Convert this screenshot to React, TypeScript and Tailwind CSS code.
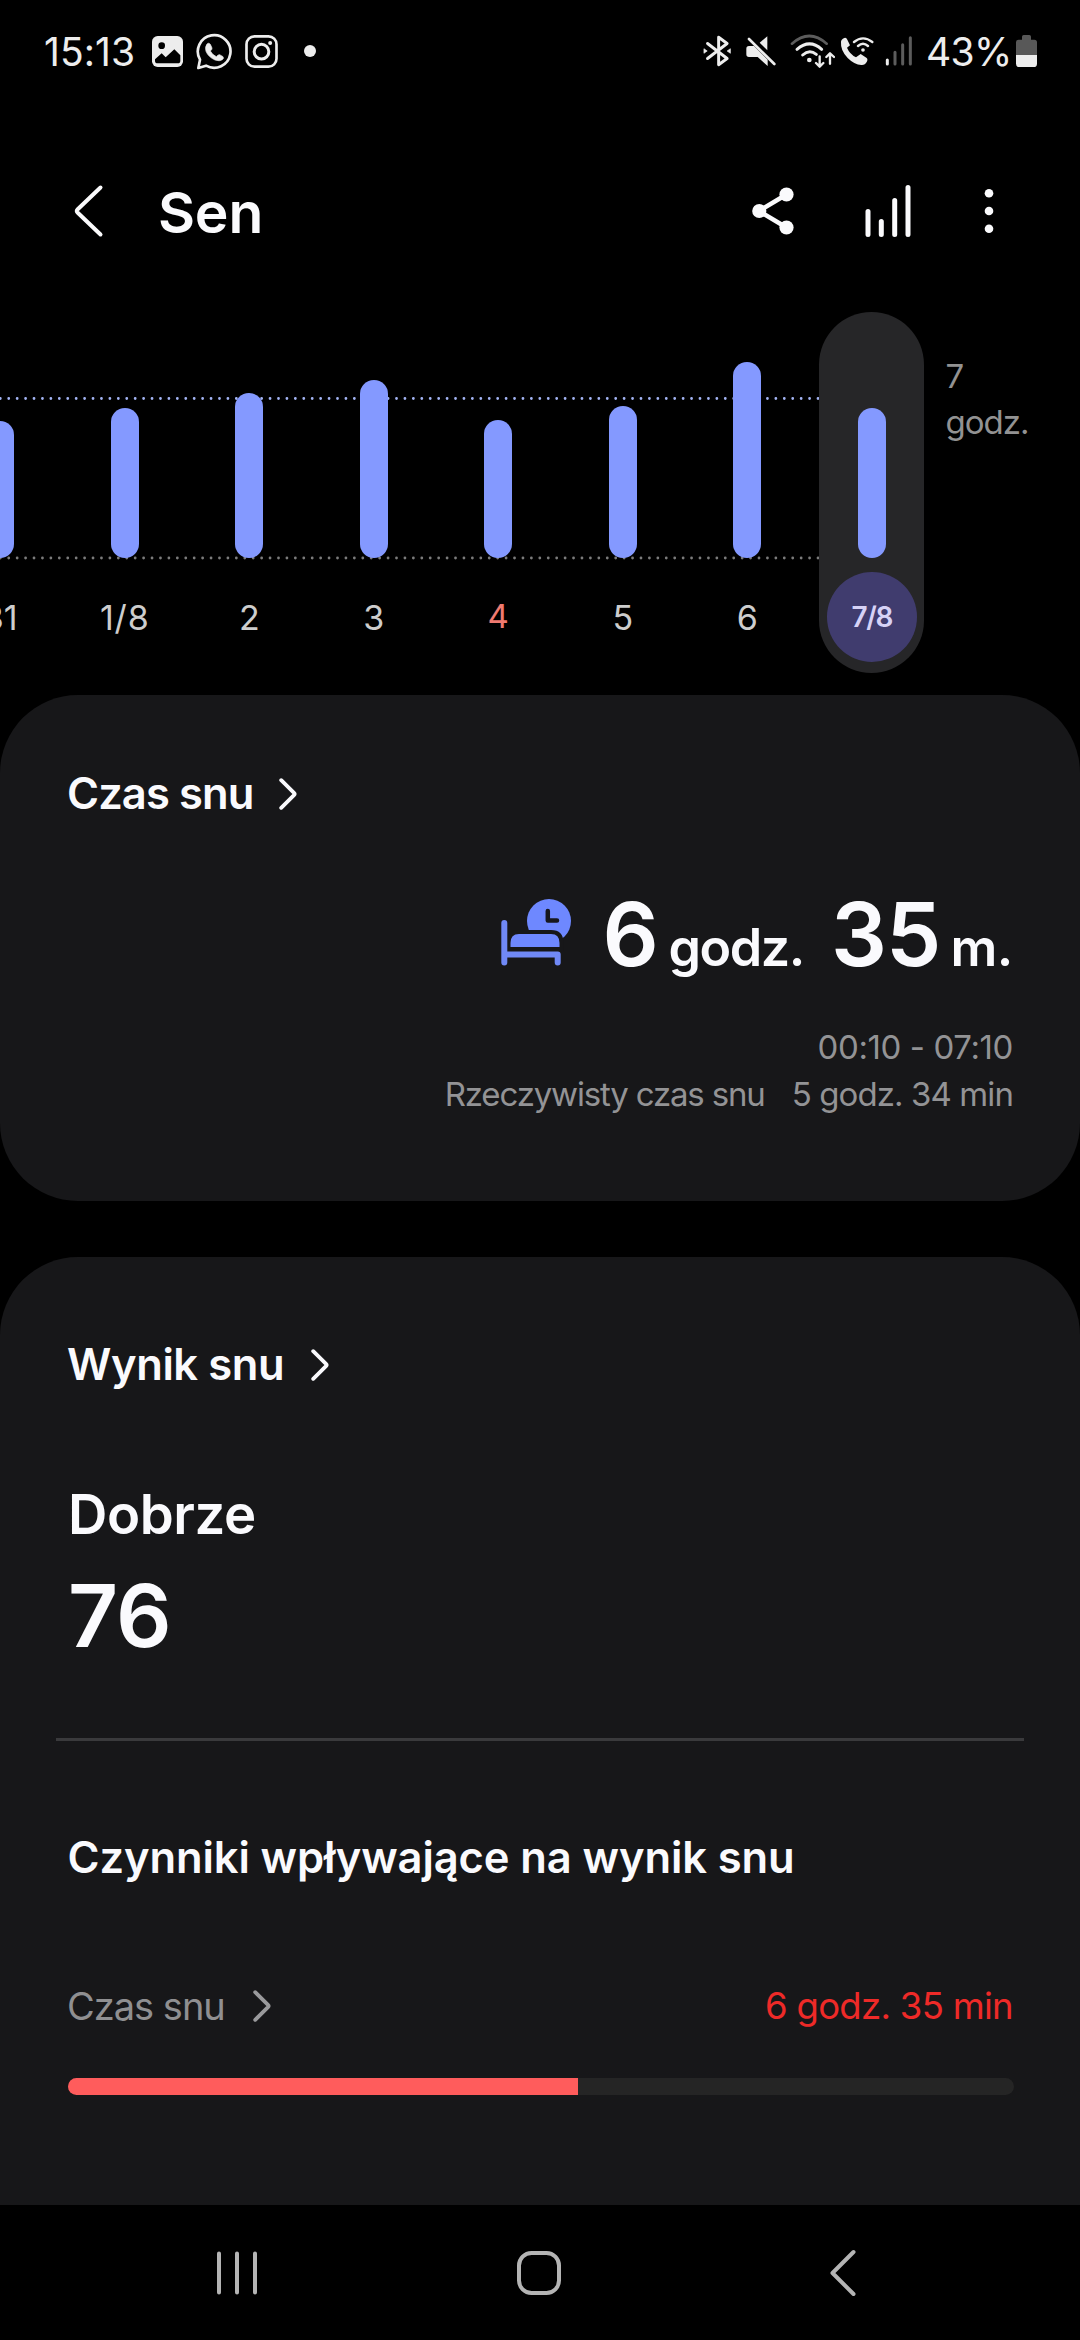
import React from "react";

type Day = { label: string; height: number; holiday?: boolean; selected?: boolean };

const DAYS: Day[] = [
  { label: "31", height: 137 },
  { label: "1/8", height: 150 },
  { label: "2", height: 165 },
  { label: "3", height: 178 },
  { label: "4", height: 138, holiday: true },
  { label: "5", height: 152 },
  { label: "6", height: 196 },
  { label: "7/8", height: 150, selected: true },
];

function StatusBar() {
  return (
    <div className="flex h-[102px] shrink-0 items-center pl-[44px] text-[#ededed]">
      <span className="w-[108px] text-[39px] leading-none tracking-[0.1px]">15:13</span>
      <svg className="h-[31px] w-[31px]" viewBox="456 108 93 93">
        <rect x="456" y="108" width="93" height="93" rx="17" fill="currentColor" />
        <circle cx="485" cy="137" r="10" fill="#000" />
        <path d="M465 178 485 160 497 172 523 148 541 166V182Q541 190 533 190H473Q465 190 465 182Z" fill="#000" />
      </svg>
      <svg className="ml-[13px] mt-[2px] h-[38px] w-[37px]" viewBox="588 98 111 114" fill="none">
        <path d="M595 203 600 178A49 49 0 1 1 618 196Z" stroke="currentColor" strokeWidth="8" strokeLinejoin="round" />
        <path
          d="M621 131q5-5 10 1l5 11q1 4-5 9 6 12 18 17 6-7 10-6l10 6q4 5-2 9-8 6-22 1-20-9-27-26-4-13 3-22Z"
          fill="currentColor"
          stroke="currentColor"
          strokeWidth="2"
        />
      </svg>
      <svg className="ml-[12px] h-[33px] w-[33px]" viewBox="735 105 98 99" fill="none" stroke="currentColor">
        <rect x="739" y="109" width="90" height="91" rx="24" strokeWidth="8" />
        <circle cx="784" cy="155" r="22" strokeWidth="9" />
        <circle cx="810" cy="129" r="6" fill="currentColor" stroke="none" />
      </svg>
      <span className="ml-[26px] h-[12px] w-[12px] rounded-full bg-[#ededed]" />

      <svg className="ml-[387px] h-[32px] w-[28px]" viewBox="69 104 84 98" fill="none">
        <path
          d="M82 130 142 176 116 195V111L142 130 82 176"
          stroke="currentColor"
          strokeWidth="9"
          strokeLinecap="round"
          strokeLinejoin="round"
        />
        <path d="M71 146 81 153 71 160ZM152 146 142 153 152 160Z" fill="currentColor" stroke="currentColor" strokeWidth="2" />
      </svg>
      <svg className="ml-[15px] h-[30px] w-[30px]" viewBox="197 107 90 90">
        <path d="M206 137H221L262 178V197L232 170H206Q198 170 198 162V145Q198 137 206 137Z" fill="currentColor" />
        <path d="M261 108V150L238 127Z" fill="currentColor" />
        <path d="M206 116 282 191" stroke="currentColor" strokeWidth="8" strokeLinecap="round" />
      </svg>
      <svg className="ml-[14px] h-[34px] w-[45px]" viewBox="328 100 135 102" fill="none" strokeLinecap="round" strokeLinejoin="round">
        <path d="M334 129Q386 83 438 129" stroke="#5c5c5c" strokeWidth="8" />
        <path d="M349 146Q387 113 423 146" stroke="currentColor" strokeWidth="9" />
        <path d="M366 163Q386 145 407 161" stroke="currentColor" strokeWidth="9" />
        <circle cx="386" cy="178" r="7" fill="currentColor" />
        <path d="M417 167V197M406 187 417 198 428 187M448 189V159M437 169 448 158 460 169" stroke="currentColor" strokeWidth="7" />
      </svg>
      <svg className="ml-[5px] h-[30px] w-[34px]" viewBox="481 108 102 90" fill="none">
        <path
          d="M484 126Q484 118 494 114 500 112 503 119L511 136 502 143Q510 162 529 172L543 162 560 173Q566 177 561 186 556 196 545 195 524 194 504 174 482 151 484 126Z"
          fill="currentColor"
        />
        <circle cx="550" cy="150" r="5.500" fill="currentColor" />
        <path d="M535 138Q550 125 565 138M523 126Q550 104 578 126" stroke="currentColor" strokeWidth="7" strokeLinecap="round" />
      </svg>
      <svg className="ml-[11px] h-[30px] w-[28px]" viewBox="614 107 84 90" strokeLinecap="round" strokeWidth="9">
        <path d="M621 179V191" stroke="currentColor" />
        <path d="M644 156V191M667 133V191M690 112V191" stroke="#5c5c5c" />
      </svg>
      <span className="ml-[13px] w-[90px] text-[39px] leading-none tracking-[-0.6px]">43%</span>
      <svg className="h-[32px] w-[21px]" viewBox="1008 102 63 96">
        <path d="M1026 116V107Q1026 102 1031 102H1048Q1053 102 1053 107V116H1063Q1071 116 1071 124V162H1008V124Q1008 116 1016 116Z" fill="#585858" />
        <path d="M1008 162H1071V188Q1071 198 1061 198H1018Q1008 198 1008 188Z" fill="currentColor" />
      </svg>
    </div>
  );
}

function Header() {
  return (
    <header className="flex h-[210px] shrink-0 items-center pt-[8px] pl-[73px] text-[#fafafc]">
      <svg className="h-[56px] w-[31px]" viewBox="0 0 31 56" fill="none">
        <path d="M27.500 4.500 4.500 26.500Q3 28 4.500 29.500L27.500 51.500" stroke="currentColor" strokeWidth="4" strokeLinecap="round" />
      </svg>
      <h1 className="mt-[2px] ml-[54px] w-[594px] text-[57px] leading-none font-semibold tracking-[-0.2px]">Sen</h1>
      <svg className="h-[48px] w-[42px]" viewBox="0 0 42 48">
        <path d="M7 24 34.500 7.500M7 24 34.500 40.500" stroke="currentColor" strokeWidth="4.500" />
        <circle cx="7.300" cy="24" r="7.100" fill="currentColor" />
        <circle cx="34.500" cy="7.500" r="7.100" fill="currentColor" />
        <circle cx="34.500" cy="40.500" r="7.100" fill="currentColor" />
      </svg>
      <svg className="ml-[71px] h-[54px] w-[46px]" viewBox="0 0 46 54" stroke="currentColor" strokeWidth="5" strokeLinecap="round">
        <path d="M3 27.500V50.500M16.300 37.500V50.500M29.700 16.500V50.500M43 3.500V50.500" />
      </svg>
      <svg className="ml-[73px] h-[46px] w-[10px]" viewBox="0 0 10 46" fill="currentColor">
        <circle cx="5" cy="5.300" r="4.300" />
        <circle cx="5" cy="23" r="4.300" />
        <circle cx="5" cy="40.700" r="4.300" />
      </svg>
    </header>
  );
}

function WeekChart() {
  return (
    <section className="relative flex h-[383px] shrink-0 overflow-hidden">
      <svg className="absolute top-0 left-0 h-[260px] w-[820px]" viewBox="0 0 820 260" strokeWidth="2.800" strokeLinecap="round">
        <path d="M0.300 86.500H819" stroke="#a3b4f4" strokeDasharray="0 8.430" />
        <path d="M0.300 246H819" stroke="#7c7c7c" strokeDasharray="0 8.430" />
      </svg>
      <div className="relative ml-[-62px] flex">
        {DAYS.map((d) => (
          <div key={d.label} className="flex w-[124.5px] justify-center">
            <div
              className={
                d.selected
                  ? "flex h-[361px] w-[105px] flex-col items-center rounded-full bg-[#262628]"
                  : "flex h-[361px] w-[105px] flex-col items-center"
              }
            >
              <div className="flex h-[246px] items-end">
                <div className="w-[28px] rounded-full bg-[#8499ff]" style={{ height: d.height }} />
              </div>
              <div
                className={
                  d.selected
                    ? "mt-[14px] flex h-[90px] w-[90px] items-center justify-center rounded-full bg-[#403c6e] text-[28px] font-semibold tracking-[-1.4px] text-[#d6d2f6]"
                    : d.holiday
                      ? "mt-[14px] flex h-[90px] w-[90px] items-center justify-center text-[33px] text-[#f07a70]"
                      : d.label.includes("/")
                        ? "mt-[14px] flex h-[90px] w-[90px] items-center justify-center text-[34px] tracking-[0.8px] text-[#cdcdcd]"
                        : "mt-[14px] flex h-[90px] w-[90px] items-center justify-center text-[34px] text-[#cdcdcd]"
                }
              >
                {d.label}
              </div>
            </div>
          </div>
        ))}
      </div>
      <div className="mt-[41px] ml-[11.5px] w-[90px] text-[33px] leading-[46px] tracking-[-1px] text-[#929292]">7 godz.</div>
    </section>
  );
}

function Chevron({ className }: { className: string }) {
  return (
    <svg className={className} viewBox="0 0 18 32" fill="none">
      <path d="M2.200 2.200 15 14.800Q16.200 16 15 17.200L2.200 29.800" stroke="currentColor" strokeWidth="3.800" strokeLinecap="round" />
    </svg>
  );
}

function BedIcon() {
  return (
    <svg className="mt-[15px] mr-[31px] h-[67px] w-[71px] self-start" viewBox="501 899 71 67" fill="none">
      <circle cx="549" cy="921" r="22" fill="#6e88ff" />
      <path d="M547.800 911V920.500H557" stroke="#17171d" strokeWidth="4.500" strokeLinecap="round" strokeLinejoin="round" />
      <path
        d="M510.500 947V943Q510.500 934 519 934H551Q559.500 934 559.500 943V947Z"
        fill="#6e88ff"
        stroke="#171719"
        strokeWidth="8"
        paintOrder="stroke"
      />
      <path d="M504.300 923V962.500M504.300 954.500H557.700V962.500" stroke="#7089f6" strokeWidth="6" strokeLinecap="round" strokeLinejoin="round" />
    </svg>
  );
}

function SleepTimeCard() {
  return (
    <section className="flex h-[506px] shrink-0 flex-col rounded-[78px] bg-[#171719] pt-[69px] pr-[67px] pl-[67px] text-[#fafafd]">
      <div className="flex h-[60px] items-center">
        <h2 className="w-[212px] text-[43.5px] font-semibold tracking-[-0.9px] whitespace-nowrap">Czas snu</h2>
        <Chevron className="h-[32px] w-[18px]" />
      </div>
      <div className="mt-[60px] flex h-[100px] items-baseline justify-end font-semibold whitespace-nowrap">
        <BedIcon />
        <span className="text-[88px] leading-[100px]">6</span>
        <span className="ml-[9.6px] text-[52px] leading-none tracking-[-1.4px]">godz.</span>
        <span className="ml-[27px] text-[88px] leading-[100px] tracking-[-1px]">35</span>
        <span className="ml-[10px] text-[52px] leading-none tracking-[-0.4px]">m.</span>
      </div>
      <div className="mt-[39.5px] flex flex-col items-end text-[33px] leading-[47px] whitespace-nowrap text-[#939395]">
        <span className="tracking-[-0.4px]">00:10 - 07:10</span>
        <div className="flex gap-[27px]">
          <span className="tracking-[-1.17px]">Rzeczywisty czas snu</span>
          <span className="tracking-[-0.9px]">5 godz. 34 min</span>
        </div>
      </div>
    </section>
  );
}

function SleepScoreCard() {
  return (
    <section className="mt-[56px] flex h-[948px] shrink-0 flex-col rounded-t-[78px] bg-[#171719] px-[67px] pt-[78px] text-[#fafafd]">
      <div className="flex h-[60px] items-center">
        <h2 className="w-[244px] text-[43.5px] font-semibold tracking-[-0.4px] whitespace-nowrap">Wynik snu</h2>
        <Chevron className="h-[32px] w-[18px]" />
      </div>
      <div className="mt-[84px] ml-[1px] text-[54.5px] leading-[70px] font-semibold tracking-[-0.4px]">Dobrze</div>
      <div className="mt-[17px] ml-[1px] text-[87px] leading-[100px] font-semibold tracking-[-0.8px]">76</div>
      <div className="mx-[-11px] mt-[72px] h-[3px] shrink-0 bg-[#3a3a3c]" />
      <h3 className="mt-[86px] ml-[0.5px] text-[43.5px] leading-[60px] font-semibold tracking-[-0.1px] whitespace-nowrap">
        Czynniki wpływające na wynik snu
      </h3>
      <div className="mt-[89px] flex h-[60px] items-center whitespace-nowrap">
        <span className="w-[186px] text-[38px] tracking-[-1px] text-[#8f8f91]">Czas snu</span>
        <Chevron className="h-[32px] w-[18px] text-[#9a9a9c]" />
        <span className="ml-auto pt-[1px] text-[36.5px] tracking-[-0.7px] text-[#ee2a28]">6 godz. 35 min</span>
      </div>
      <div className="mt-[42px] mr-[-1px] ml-[1px] h-[17px] shrink-0 overflow-hidden rounded-full bg-[#252525]">
        <div className="h-full w-[510px] bg-[#ff5c5c]" />
      </div>
    </section>
  );
}

function NavBar() {
  return (
    <nav className="flex h-[135px] shrink-0 items-center bg-black pl-[217px] text-[#b4b4b4]">
      <svg className="h-[44px] w-[40px]" viewBox="0 0 40 44" stroke="currentColor" strokeWidth="4" strokeLinecap="round">
        <path d="M2 2.500V41.500M20 2.500V41.500M38 2.500V41.500" />
      </svg>
      <svg className="ml-[260px] h-[44px] w-[44px]" viewBox="0 0 44 44" fill="none">
        <rect x="2" y="2" width="40" height="40" rx="12.500" stroke="currentColor" strokeWidth="4" />
      </svg>
      <svg className="ml-[268px] h-[48px] w-[28px]" viewBox="0 0 28 48" fill="none">
        <path d="M24.500 3 3.500 24 24.500 45" stroke="currentColor" strokeWidth="4" strokeLinecap="round" strokeLinejoin="round" />
      </svg>
    </nav>
  );
}

export default function App() {
  return (
    <main className="flex h-[2340px] w-[1080px] flex-col overflow-hidden bg-black font-['Inter',sans-serif]">
      <StatusBar />
      <Header />
      <WeekChart />
      <SleepTimeCard />
      <SleepScoreCard />
      <NavBar />
    </main>
  );
}
